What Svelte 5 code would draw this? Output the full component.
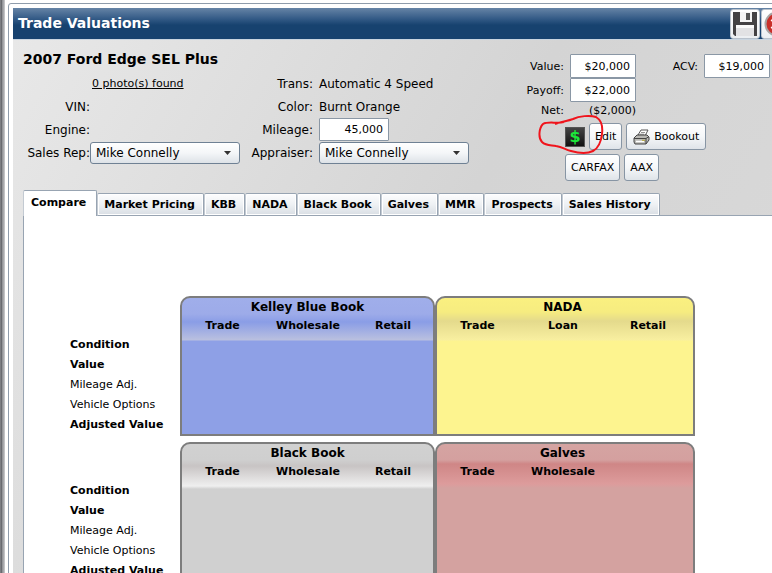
<script>
  const tabs = ['Compare', 'Market Pricing', 'KBB', 'NADA', 'Black Book', 'Galves', 'MMR', 'Prospects', 'Sales History'];
  const rows = [
    { name: 'Condition', strong: true },
    { name: 'Value', strong: true },
    { name: 'Mileage Adj.', strong: false },
    { name: 'Vehicle Options', strong: false },
    { name: 'Adjusted Value', strong: true }
  ];
  const groups = [
    [
      { title: 'Kelley Blue Book', theme: 'blue', columns: ['Trade', 'Wholesale', 'Retail'] },
      { title: 'NADA', theme: 'yellow', columns: ['Trade', 'Loan', 'Retail'] }
    ],
    [
      { title: 'Black Book', theme: 'grey', columns: ['Trade', 'Wholesale', 'Retail'] },
      { title: 'Galves', theme: 'red', columns: ['Trade', 'Wholesale', ''] }
    ]
  ];
  let active = $state('Compare');
  let mileage = $state('45,000');
  let value = $state('$20,000');
  let payoff = $state('$22,000');
  let acv = $state('$19,000');
</script>

<div class="page">
  <main class="window">
    <header class="titlebar">
      <h1>Trade Valuations</h1>
      <div class="tools">
        <button class="tool" aria-label="Save">
          <svg width="26" height="26" viewBox="0 0 26 26">
            <path d="M1 1H25V25H3L1 23Z" fill="#444244" />
            <path d="M8 1H20V11H8Z" fill="#f4f4f4" />
            <path d="M14 2H18V9H14Z" fill="#555" />
            <path d="M4 14H22V25H4Z" fill="#e2e2e4" />
            <path d="M4 14H22V17H4Z" fill="#fafafa" />
          </svg>
        </button>
        <button class="tool" aria-label="Cancel">
          <svg width="26" height="26" viewBox="0 0 26 26">
            <circle cx="14" cy="13" r="11.5" fill="#c9302a" stroke="#a9a4a4" stroke-width="2" />
            <path d="M9 8L19 18M19 8L9 18" stroke="#fff" stroke-width="4" />
          </svg>
        </button>
      </div>
    </header>

    <div class="body">
      <div class="summary">
        <section class="vehicle">
          <h2>2007 Ford Edge SEL Plus</h2>
          <div class="fields">
            <span></span>
            <a class="photos" href="#photos">0 photo(s) found</a>
            <span class="label">Trans:</span>
            <span>Automatic 4 Speed</span>

            <span class="label">VIN:</span>
            <span></span>
            <span class="label">Color:</span>
            <span>Burnt Orange</span>

            <span class="label">Engine:</span>
            <span></span>
            <label class="label" for="mileage">Mileage:</label>
            <input id="mileage" class="mileage" bind:value={mileage} />

            <label class="label" for="rep">Sales Rep:</label>
            <span class="select">
              <select id="rep"><option>Mike Connelly</option></select>
              <svg width="7" height="4" viewBox="0 0 7 4"><path d="M0 0H7L3.5 4Z" fill="#333" /></svg>
            </span>
            <label class="label" for="appraiser">Appraiser:</label>
            <span class="select">
              <select id="appraiser"><option>Mike Connelly</option></select>
              <svg width="7" height="4" viewBox="0 0 7 4"><path d="M0 0H7L3.5 4Z" fill="#333" /></svg>
            </span>
          </div>
        </section>

        <section class="finance">
          <div class="money">
            <label class="label" for="value">Value:</label>
            <input id="value" bind:value />
            <label class="label" for="acv">ACV:</label>
            <input id="acv" bind:value={acv} />
            <label class="label" for="payoff">Payoff:</label>
            <input id="payoff" bind:value={payoff} />
            <span></span><span></span>
            <span class="label">Net:</span>
            <span class="net">($2,000)</span>
          </div>
          <div class="actions">
            <div class="row">
              <button class="dollar" aria-label="Payments">$</button>
              <button class="btn">Edit</button>
              <button class="btn bookout">
                <svg width="17" height="16" viewBox="0 0 17 16">
                  <path d="M5 6L8 1H15L12 7Z" fill="#fff" stroke="#555" />
                  <path d="M8 3.5H12M7 5.2H11" stroke="#777" stroke-width="0.8" />
                  <path d="M1 9L4 6H14L16 8V11L13 15H2L1 13Z" fill="#b9b9b5" stroke="#444" />
                  <path d="M1 9.5H13L16 7.5M13 9.5V15" fill="none" stroke="#444" />
                  <path d="M3 12.5H11" stroke="#fff" stroke-width="1.5" />
                  <path d="M9 11.3H12" stroke="#b5a436" />
                </svg>
                Bookout
              </button>
              <svg class="scribble" width="70" height="44" viewBox="536 112 70 44" aria-hidden="true">
                <path d="M564 122C557 124 548 121 543 124C539 128 538 138 542 142C546 146 551 145 556 146C563 147 564 149 571 151C578 153 587 154 593 151C599 148 601 142 602 134C603 126 601 120 596 117C590 115 579 116 573 119C568 121 560 122 555 124" />
              </svg>
            </div>
            <div class="row">
              <button class="btn">CARFAX</button>
              <button class="btn">AAX</button>
            </div>
          </div>
        </section>
      </div>

      <div class="tabs" role="tablist">
        {#each tabs as tab}
          <button role="tab" class="tab" class:active={tab === active} aria-selected={tab === active} onclick={() => (active = tab)}>{tab}</button>
        {/each}
      </div>

      <section class="panel">
        {#each groups as books}
          <div class="group">
            <ul class="names">
              {#each rows as row}
                <li class:strong={row.strong}>{row.name}</li>
              {/each}
            </ul>
            {#each books as book}
              <table class="book {book.theme}">
                <colgroup><col class="first" /><col class="second" /><col /></colgroup>
                <thead>
                  <tr><th class="title" colspan="3">{book.title}</th></tr>
                  <tr>
                    {#each book.columns as column}<th>{column}</th>{/each}
                  </tr>
                </thead>
                <tbody>
                  {#each rows as row}
                    <tr>{#each book.columns as column}<td></td>{/each}</tr>
                  {/each}
                </tbody>
              </table>
            {/each}
          </div>
        {/each}
      </section>
    </div>
  </main>
</div>

<style>
  :global(html) {
    scrollbar-width: none;
  }
  :global(body) {
    background: #fff;
  }
  .page {
    box-sizing: border-box;
    min-height: 100vh;
    display: flex;
    padding: 3px 0 0 8px;
    overflow: hidden;
    background: linear-gradient(90deg, #85878c 0, #5f6166 2px, #c8cacd 3px, #85878c 4px, #fff 5px);
    background-size: 8px 100%;
    background-repeat: no-repeat;
    font-family: Verdana, "DejaVu Sans", sans-serif;
    font-size: 12px;
    color: #000;
  }
  .window {
    flex: 1;
    margin-right: -24px;
    padding: 4px;
    border: 1px solid #8f9cab;
    border-radius: 3px 0 0 0;
    display: flex;
    flex-direction: column;
  }
  .titlebar {
    height: 31px;
    display: flex;
    align-items: center;
    justify-content: space-between;
    padding: 0 0 0 5px;
    background: linear-gradient(#6684a6, #335a86 35%, #17426f 55%, #17426f);
  }
  h1 {
    margin: 0;
    padding-bottom: 2px;
    font-size: 14px;
    line-height: 20px;
    color: #fff;
  }
  .tools {
    display: flex;
    gap: 1px;
  }
  button,
  input,
  select {
    box-sizing: border-box;
    font-family: inherit;
    color: #000;
  }
  .tool {
    width: 30px;
    height: 30px;
    padding: 0;
    border: 1px solid #b9c2cc;
    border-radius: 3px;
    background: linear-gradient(#fff, #eceff2);
    display: grid;
    place-items: center;
  }
  .body {
    flex: 1;
    padding: 8px 0 0 10px;
    background: linear-gradient(120deg, #e8e8e8, #d4d4d4 50%, #dadada);
    border-top: 1px solid #c9d5e0;
    display: flex;
    flex-direction: column;
  }
  .summary {
    display: flex;
    height: 142px;
  }
  h2 {
    margin: 0;
    font-size: 14px;
    line-height: 22px;
  }
  .fields {
    display: grid;
    grid-template-columns: 67px 150px 73px 156px;
    grid-auto-rows: 23px;
    align-items: center;
    padding-top: 2px;
  }
  .fields > :nth-child(4n) {
    margin-left: 6px;
  }
  .label {
    text-align: right;
    white-space: nowrap;
  }
  .photos {
    padding-left: 2px;
    font-size: 11px;
    color: #000;
  }
  input {
    width: 66px;
    height: 24px;
    padding: 0 5px;
    border: 1px solid #8a97a5;
    border-radius: 1px;
    background: #fff;
    font-size: 11px;
    text-align: right;
  }
  .mileage {
    width: 70px;
    height: 23px;
  }
  .select {
    position: relative;
    width: 150px;
  }
  select {
    display: block;
    width: 150px;
    height: 22px;
    padding: 0 5px;
    border: 1px solid #6f8194;
    border-radius: 3px;
    appearance: none;
    background: linear-gradient(#fff, #f4f6f8 50%, #dde2e7);
    font-size: 12px;
  }
  .select svg {
    position: absolute;
    right: 9px;
    top: 9px;
    pointer-events: none;
  }
  .finance {
    margin-left: 48px;
    padding-top: 6px;
    font-size: 11px;
  }
  .money {
    display: grid;
    grid-template-columns: 47px 66px 56px 66px;
    grid-template-rows: 24px 24px 16px;
    column-gap: 6px;
    align-items: center;
  }
  .net {
    text-align: right;
  }
  .actions {
    display: flex;
    flex-direction: column;
    gap: 4px;
    padding: 5px 0 0 48px;
  }
  .row {
    position: relative;
    display: flex;
    align-items: center;
    gap: 4px;
  }
  .btn {
    height: 27px;
    padding: 0 5px;
    border: 1px solid #8795a4;
    border-radius: 3px;
    background: linear-gradient(#fff, #f5f7f9 50%, #dfe4e9);
    font-size: 11px;
    display: flex;
    align-items: center;
    gap: 4px;
  }
  .bookout {
    padding: 0 6px;
  }
  .dollar {
    width: 20px;
    height: 20px;
    padding: 0;
    border: 1px solid #555;
    background: linear-gradient(#444, #111);
    color: #1be83a;
    font-size: 16px;
    font-weight: bold;
    line-height: 18px;
  }
  .scribble {
    position: absolute;
    left: -29px;
    top: -11px;
    fill: none;
    stroke: #f0141c;
    stroke-width: 2;
    pointer-events: none;
  }
  .tabs {
    display: flex;
    align-items: flex-end;
    height: 26px;
    margin-bottom: -1px;
    position: relative;
  }
  .tab {
    height: 23px;
    padding: 0 8px 0 6px;
    border: 1px solid #98a4b2;
    border-left-color: #c3cad2;
    border-radius: 2px 2px 0 0;
    background: linear-gradient(#fdfdfe, #eef1f4 50%, #d9dee4);
    box-shadow: inset 0 0 0 1px #fff;
    font-size: 11px;
    font-weight: bold;
    white-space: nowrap;
  }
  .tab.active {
    height: 26px;
    padding: 0 10px 2px 7px;
    border-bottom: 0;
    background: #fff;
  }
  .panel {
    flex: 1;
    padding: 80px 0 0 46px;
    border: 1px solid #98a4b2;
    border-bottom: 0;
    background: #fff;
  }
  .group {
    display: grid;
    grid-template-columns: 110px 255px 260px;
    margin-bottom: 6px;
  }
  .names {
    margin: 0;
    padding: 39px 0 0;
    list-style: none;
    font-size: 11px;
    line-height: 20px;
  }
  .strong {
    font-weight: bold;
  }
  .book {
    width: 100%;
    height: 140px;
    table-layout: fixed;
    border: 2px solid #7d7d7d;
    border-radius: 10px 10px 0 0;
    border-spacing: 0;
    font-size: 11px;
  }
  .first {
    width: 81px;
  }
  .second {
    width: 90px;
  }
  th {
    height: 20px;
    padding: 0;
    line-height: 20px;
  }
  th.title {
    height: 18px;
    font-size: 12px;
    line-height: 18px;
  }
  td {
    height: 19px;
    padding: 0;
  }
  .blue {
    background: linear-gradient(#a0aeea, #9dabe9 16px, #8a9de6 24px, #bac0df 42px, #8ea0e6 43px);
  }
  .yellow {
    padding: 0 5px 0 0;
    background: linear-gradient(#faf080, #f6ec80 14px, #e4da8c 23px, #f8efa0 42px, #fdf48f 43px);
  }
  .grey {
    background: linear-gradient(#d1d1d1, #cfcfcf 16px, #c8c4c4 22px, #efefef 42px, #d0d0d0 45px);
  }
  .red {
    padding: 0 5px 0 0;
    background: linear-gradient(#d5a4a2, #d4a09f 16px, #cf8686 20px, #dd9c9c 40px, #d4a2a0 44px);
  }
</style>
